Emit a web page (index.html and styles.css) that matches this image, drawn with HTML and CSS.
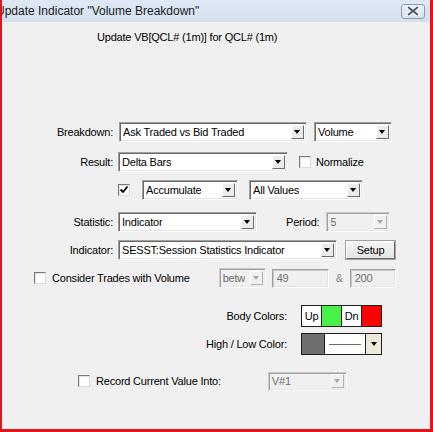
FILE: index.html
```html
<!DOCTYPE html>
<html lang="en">
<head>
    <meta charset="UTF-8">
    <title>Update Indicator</title>
    <link rel="stylesheet" href="styles.css">
</head>
<body>
    <div class="window">
        <div class="titlebar">
            <span class="title">Update Indicator "Volume Breakdown"</span>
            <span class="close">
                <svg width="14" height="10" viewBox="0 0 14 10">
                    <path d="M2 1 L12 9 M12 1 L2 9" stroke="#fff" stroke-width="4" stroke-linecap="round"/>
                    <path d="M2 1 L12 9 M12 1 L2 9" stroke="#4a5568" stroke-width="2"/>
                </svg>
            </span>
        </div>

        <div class="content">
            <div class="subtitle">Update VB[QCL# (1m)] for QCL# (1m)</div>

            <div class="row row-breakdown">
                <span class="lbl">Breakdown:</span>
                <div class="combo w-breakdown"><span class="val">Ask Traded vs Bid Traded</span><span class="drop"></span></div>
                <div class="combo w-volume"><span class="val">Volume</span><span class="drop"></span></div>
            </div>

            <div class="row row-result">
                <span class="lbl">Result:</span>
                <div class="combo w-result"><span class="val">Delta Bars</span><span class="drop"></span></div>
                <span class="chk chk-normalize"></span>
                <span class="chk-text">Normalize</span>
            </div>

            <div class="row row-accum">
                <span class="chk checked">
                    <svg width="10" height="10" viewBox="0 0 10 10"><path d="M1.5 4.5 L4 7 L8.5 1.5" fill="none" stroke="#000" stroke-width="1.8"/></svg>
                </span>
                <div class="combo w-accum"><span class="val">Accumulate</span><span class="drop"></span></div>
                <div class="combo w-values"><span class="val">All Values</span><span class="drop"></span></div>
            </div>

            <div class="row row-statistic">
                <span class="lbl">Statistic:</span>
                <div class="combo w-statistic"><span class="val">Indicator</span><span class="drop"></span></div>
                <span class="period">Period:</span>
                <div class="combo disabled w-period"><span class="val">5</span><span class="drop"></span></div>
            </div>

            <div class="row row-indicator">
                <span class="lbl">Indicator:</span>
                <div class="combo w-indicator"><span class="val">SESST:Session Statistics Indicator</span><span class="drop"></span></div>
                <span class="btn">Setup</span>
            </div>

            <div class="row row-consider">
                <span class="chk"></span>
                <span class="chk-text consider-text">Consider Trades with Volume</span>
                <div class="combo disabled w-betw"><span class="val">betw</span><span class="drop"></span></div>
                <span class="field">49</span>
                <span class="amp">&amp;</span>
                <span class="field w-field2">200</span>
            </div>

            <div class="row row-body">
                <span class="lbl lbl-wide">Body Colors:</span>
                <div class="swatches">
                    <span class="sw sw-text">Up</span>
                    <span class="sw sw-up"></span>
                    <span class="sw sw-text">Dn</span>
                    <span class="sw sw-dn"></span>
                </div>
            </div>

            <div class="row row-hilo">
                <span class="lbl lbl-wide">High / Low Color:</span>
                <div class="swatches">
                    <span class="sw sw-gray"></span>
                    <span class="sw sw-line"><i></i></span>
                    <span class="sw sw-drop"><b></b></span>
                </div>
            </div>

            <div class="row row-record">
                <span class="chk"></span>
                <span class="chk-text record-text">Record Current Value Into:</span>
                <div class="combo disabled w-record"><span class="val">V#1</span><span class="drop"></span></div>
            </div>
        </div>
    </div>
</body>
</html>
```

FILE: styles.css
```css
body {
    margin: 0;
    background: #f0f0f0;
    font-family: "Liberation Sans", Arial, sans-serif;
    font-size: 11px;
    letter-spacing: -0.2px;
    color: #000;
}

.window {
    width: 433px;
    height: 432px;
    box-sizing: border-box;
    border-left: 2px solid #e3141c;
    border-right: 3px solid #e3141c;
    border-bottom: 3px solid #e3141c;
    background: #f0f0f0;
    overflow: hidden;
}

/* caption */
.titlebar {
    height: 22px;
    display: flex;
    align-items: center;
    justify-content: space-between;
    background: linear-gradient(#dfe9f5, #d4e0ee);
    overflow: hidden;
}

.title {
    margin-left: -6px;
    font-size: 12px;
    letter-spacing: 0;
    color: #1b1b1b;
    white-space: nowrap;
}

.close {
    width: 24px;
    height: 15px;
    margin-right: 5px;
    box-sizing: border-box;
    border: 1px solid #8e9cb1;
    border-radius: 3px;
    background: linear-gradient(#eef3f9, #d5dfeb);
    display: flex;
    align-items: center;
    justify-content: center;
}

/* form body */
.content {
    display: flex;
    flex-direction: column;
}

.subtitle {
    margin: 8px 0 0 95px;
    height: 14px;
    line-height: 14px;
}

.row {
    display: flex;
    align-items: center;
    height: 20px;
}

.row-breakdown { margin-top: 78px; }
.row-result { margin-top: 10px; }
.row-accum { margin-top: 8px; }
.row-statistic { margin-top: 12px; }
.row-indicator { margin-top: 8px; }
.row-consider { margin-top: 8px; }
.row-body { margin-top: 17px; height: 22px; }
.row-hilo { margin-top: 6px; height: 22px; }
.row-record { margin-top: 16px; }

.lbl {
    width: 111px;
    text-align: right;
    margin-right: 5px;
    white-space: nowrap;
}

.lbl-wide {
    width: 285px;
    margin-right: 14px;
}

/* drop-down boxes */
.combo {
    height: 20px;
    box-sizing: border-box;
    display: flex;
    align-items: center;
    justify-content: space-between;
    background: #fff;
    border: 1px solid;
    border-color: #a0a0a0 #fff #fff #a0a0a0;
    box-shadow: inset 1px 1px 0 #696969, inset -1px -1px 0 #e3e3e3;
}

.combo .val {
    padding-left: 3px;
    white-space: nowrap;
    overflow: hidden;
}

.combo .drop {
    position: relative;
    flex: none;
    width: 13px;
    height: 14px;
    margin-right: 2px;
    box-sizing: border-box;
    background: #ececec;
    border: 1px solid;
    border-color: #fff #696969 #696969 #fff;
}

.combo .drop::after {
    content: "";
    position: absolute;
    left: 2px;
    top: 4px;
    border-left: 3.5px solid transparent;
    border-right: 3.5px solid transparent;
    border-top: 4px solid #000;
}

.combo.disabled {
    background: #f0f0f0;
    border-color: #c8c8c8 #fff #fff #c8c8c8;
    box-shadow: inset 1px 1px 0 #a0a0a0, inset -1px -1px 0 #e8e8e8;
    color: #6d6d6d;
}

.combo.disabled .drop {
    background: #f0f0f0;
    border-color: #fff #b0b0b0 #b0b0b0 #fff;
}

.combo.disabled .drop::after {
    border-top-color: #a8a8a8;
}

.w-breakdown { width: 188px; margin-left: 1px; }
.w-volume { width: 78px; margin-left: 7px; }
.w-result { width: 170px; }
.w-accum { width: 96px; margin-left: 12px; }
.w-values { width: 114px; margin-left: 11px; }
.w-statistic { width: 139px; }
.w-period { width: 64px; margin-left: 7px; }
.w-indicator { width: 219px; }
.w-betw { width: 47px; margin-left: 29px; }
.w-record { width: 79px; margin-left: 47px; height: 19px; }

/* check boxes */
.chk {
    flex: none;
    width: 12px;
    height: 12px;
    box-sizing: border-box;
    background: #fff;
    border: 1px solid;
    border-color: #7a7a7a #dcdcdc #dcdcdc #7a7a7a;
    box-shadow: inset 1px 1px 0 #e3e3e3;
    display: flex;
    align-items: center;
    justify-content: center;
}

.chk-text {
    margin-left: 5px;
    white-space: nowrap;
}

.chk-normalize { margin-left: 11px; }

.row-accum .chk { margin-left: 116px; }
.row-consider .chk { margin-left: 32px; }
.row-record .chk { margin-left: 76px; }

.consider-text { margin-left: 6px; }
.record-text { margin-left: 6px; }

.period {
    margin-left: 29px;
}

.btn {
    width: 49px;
    height: 18px;
    margin-left: 9px;
    box-sizing: border-box;
    display: flex;
    align-items: center;
    justify-content: center;
    background: linear-gradient(#f4f4f4, #e4e4e4);
    border: 1px solid;
    border-color: #fff #696969 #696969 #fff;
    box-shadow: 0 0 0 1px #a0a0a0;
}

/* disabled edit fields */
.field {
    width: 57px;
    height: 19px;
    margin-left: 6px;
    box-sizing: border-box;
    display: flex;
    align-items: center;
    padding-left: 4px;
    color: #6d6d6d;
    background: #f0f0f0;
    border: 1px solid;
    border-color: #a0a0a0 #fff #fff #a0a0a0;
    box-shadow: inset 1px 1px 0 #c8c8c8, inset -1px -1px 0 #e3e3e3;
}

.w-field2 { width: 46px; }

.amp {
    margin-left: 7px;
    width: 8px;
    color: #8a8a8a;
}

/* colour pickers */
.swatches {
    width: 81px;
    height: 22px;
    box-sizing: border-box;
    display: flex;
    border: 1px solid #1e1e1e;
    background: #fff;
}

.sw {
    border-right: 1px solid #1e1e1e;
    display: flex;
    align-items: center;
    justify-content: center;
}

.sw:last-child {
    border-right: none;
}

.sw-text { width: 19px; }
.sw-up { width: 19px; background: #48f048; }
.sw-dn { flex: 1; background: #ff0000; }

.sw-gray { width: 22px; background: #6f6f6f; }

.sw-line { width: 40px; }

.sw-line i {
    display: block;
    width: 32px;
    height: 1px;
    background: #6a6a6a;
}

.sw-drop {
    flex: 1;
    position: relative;
    background: #ece9d8;
}

.sw-drop b {
    border-left: 3.5px solid transparent;
    border-right: 3.5px solid transparent;
    border-top: 4px solid #000;
}
```
